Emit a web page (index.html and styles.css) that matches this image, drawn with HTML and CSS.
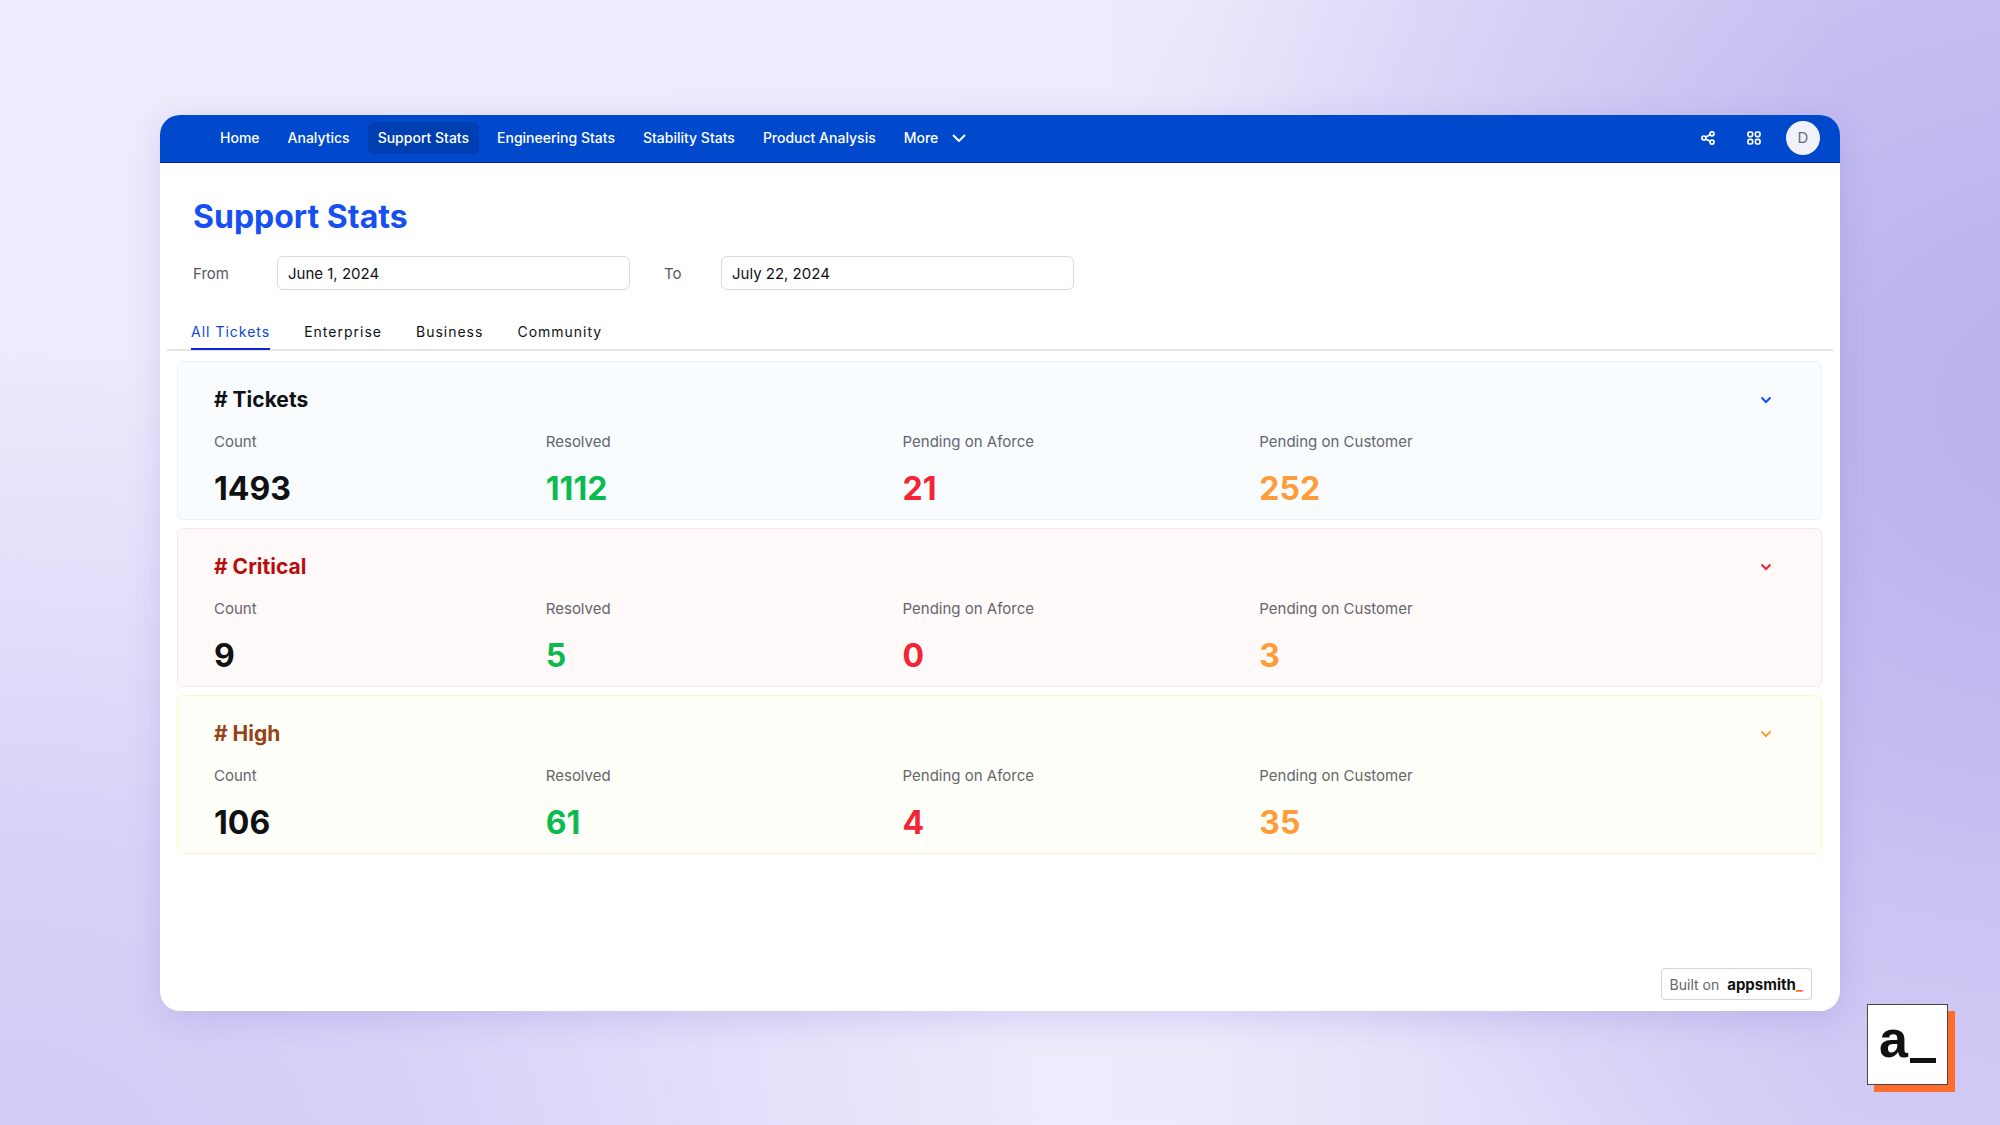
FILE: index.html
```html
<!DOCTYPE html>
<html lang="en">
<head>
  <meta charset="UTF-8" />
  <meta name="viewport" content="width=device-width, initial-scale=1" />
  <title>Support Stats</title>
  <link rel="stylesheet" href="styles.css">
</head>
<body>
  <div class="window">
    <!-- Top navigation -->
    <header class="navbar">
      <nav class="nav-links">
        <a href="#">Home</a>
        <a href="#">Analytics</a>
        <a href="#" class="active">Support Stats</a>
        <a href="#">Engineering Stats</a>
        <a href="#">Stability Stats</a>
        <a href="#">Product Analysis</a>
        <button class="more" type="button">
          More
          <svg width="14" height="8" viewBox="0 0 14 8" fill="none" stroke="currentColor" stroke-width="2"><path d="M1 1l6 6 6-6"/></svg>
        </button>
      </nav>
      <div class="nav-actions">
        <button class="icon-btn" type="button" aria-label="Share">
          <svg width="14" height="14" viewBox="0 0 14 14" fill="none" stroke="currentColor" stroke-width="1.7">
            <circle cx="2.9" cy="7" r="2"/>
            <circle cx="11" cy="2.8" r="2"/>
            <circle cx="11" cy="11.2" r="2"/>
            <path d="M4.7 6.1l4.5-2.4M4.7 7.9l4.5 2.4"/>
          </svg>
        </button>
        <button class="icon-btn" type="button" aria-label="Apps">
          <svg width="14" height="14" viewBox="0 0 14 14" fill="none" stroke="currentColor" stroke-width="1.7">
            <rect x="1" y="1" width="4.6" height="4.6" rx="1.6"/>
            <rect x="8.4" y="1" width="4.6" height="4.6" rx="1.6"/>
            <rect x="1" y="8.4" width="4.6" height="4.6" rx="1.6"/>
            <rect x="8.4" y="8.4" width="4.6" height="4.6" rx="1.6"/>
          </svg>
        </button>
        <button class="avatar" type="button">D</button>
      </div>
    </header>

    <main class="content">
      <h1>Support Stats</h1>

      <!-- Date range -->
      <form class="dates">
        <div class="field">
          <label for="from">From</label>
          <input id="from" type="text" value="June 1, 2024">
        </div>
        <div class="field field-to">
          <label for="to">To</label>
          <input id="to" type="text" value="July 22, 2024">
        </div>
      </form>

      <div class="tabs" role="tablist">
        <button class="tab selected" role="tab" aria-selected="true" type="button">All Tickets</button>
        <button class="tab" role="tab" type="button">Enterprise</button>
        <button class="tab" role="tab" type="button">Business</button>
        <button class="tab" role="tab" type="button">Community</button>
      </div>

      <!-- Ticket cards -->
      <div class="cards">
        <section class="card tickets">
          <div class="card-head">
            <h2># Tickets</h2>
            <button class="toggle" type="button" aria-label="Expand tickets">
              <svg width="12" height="8" viewBox="0 0 12 8" fill="none" stroke="currentColor" stroke-width="2"><path d="M1.5 1.5L6 6l4.5-4.5"/></svg>
            </button>
          </div>
          <dl class="stats">
            <div><dt>Count</dt><dd>1493</dd></div>
            <div><dt>Resolved</dt><dd class="green">1112</dd></div>
            <div><dt>Pending on Aforce</dt><dd class="red">21</dd></div>
            <div><dt>Pending on Customer</dt><dd class="orange">252</dd></div>
          </dl>
        </section>

        <section class="card critical">
          <div class="card-head">
            <h2># Critical</h2>
            <button class="toggle" type="button" aria-label="Expand critical">
              <svg width="12" height="8" viewBox="0 0 12 8" fill="none" stroke="currentColor" stroke-width="2"><path d="M1.5 1.5L6 6l4.5-4.5"/></svg>
            </button>
          </div>
          <dl class="stats">
            <div><dt>Count</dt><dd>9</dd></div>
            <div><dt>Resolved</dt><dd class="green">5</dd></div>
            <div><dt>Pending on Aforce</dt><dd class="red">0</dd></div>
            <div><dt>Pending on Customer</dt><dd class="orange">3</dd></div>
          </dl>
        </section>

        <section class="card high">
          <div class="card-head">
            <h2># High</h2>
            <button class="toggle" type="button" aria-label="Expand high">
              <svg width="12" height="8" viewBox="0 0 12 8" fill="none" stroke="currentColor" stroke-width="2"><path d="M1.5 1.5L6 6l4.5-4.5"/></svg>
            </button>
          </div>
          <dl class="stats">
            <div><dt>Count</dt><dd>106</dd></div>
            <div><dt>Resolved</dt><dd class="green">61</dd></div>
            <div><dt>Pending on Aforce</dt><dd class="red">4</dd></div>
            <div><dt>Pending on Customer</dt><dd class="orange">35</dd></div>
          </dl>
        </section>
      </div>
    </main>

    <footer class="footer">
      <a class="built-on" href="#">Built on <span class="brand">appsmith<span class="cursor">_</span></span></a>
    </footer>
  </div>

  <!-- Logo in the page corner -->
  <div class="logo">a<span class="logo-bar"></span></div>
</body>
</html>
```
FILE: styles.css
```css
* {
  box-sizing: border-box;
}

body {
  margin: 0;
  min-height: 100vh;
  padding: 115px 8% 114px;
  display: flex;
  position: relative;
  font-family: Inter, "Liberation Sans", sans-serif;
  font-size: 15px;
  color: #101112;
  background:
    radial-gradient(ellipse 52% 76% at 104% 36%, #b9b0ec 0%, rgba(185, 176, 236, 0.8) 25%, rgba(185, 176, 236, 0.3) 65%, rgba(185, 176, 236, 0) 100%),
    radial-gradient(ellipse 52% 75% at 0% 105%, #d1c9f6 0%, rgba(209, 201, 246, 0.75) 40%, rgba(209, 201, 246, 0) 100%),
    linear-gradient(90deg, #eeebfc 0%, #edeafc 60%, #d5cef6 92%, #d5cef6 100%);
}

button {
  font: inherit;
  color: inherit;
  background: none;
  border: none;
  padding: 0;
  cursor: pointer;
}

.window {
  flex: 1;
  min-width: 0;
  display: flex;
  flex-direction: column;
  background: #fff;
  border-radius: 20px;
  overflow: hidden;
  box-shadow: 0 8px 32px rgba(90, 70, 190, 0.16);
}

/* ===== Navbar ===== */
.navbar {
  display: flex;
  align-items: center;
  justify-content: space-between;
  height: 48px;
  padding: 0 20px 2px 50px;
  background: #0049cc;
  border-bottom: 1px solid #0019b8;
  color: #fff;
}
.nav-links {
  display: flex;
  gap: 8px;
  font-size: 14px;
  font-weight: 500;
}
.nav-links a,
.more {
  display: flex;
  align-items: center;
  height: 32px;
  padding: 0 10px;
  border-radius: 6px;
  color: #fff;
  text-decoration: none;
  white-space: nowrap;
}
.nav-links a.active {
  background: #003fb2;
}
.more {
  gap: 14px;
}
.nav-actions {
  display: flex;
  align-items: center;
  gap: 14px;
}
.icon-btn {
  display: flex;
  align-items: center;
  justify-content: center;
  width: 32px;
  height: 32px;
}
.avatar {
  width: 34px;
  height: 34px;
  margin-left: 2px;
  border-radius: 50%;
  background: #f1f2f9;
  color: #6a6d78;
}

/* ===== Page content ===== */
.content {
  padding: 34px 7px 0;
}
h1 {
  margin: 0 26px;
  font-size: 32px;
  line-height: 40px;
  font-weight: 700;
  color: #1650f0;
}
.dates {
  display: flex;
  gap: 34px;
  margin: 19px 26px 0;
}
.field {
  display: flex;
  align-items: center;
}
.field label {
  width: 84px;
  color: #55585f;
}
.field-to label {
  width: 57px;
}
.field input {
  width: 353px;
  height: 34px;
  padding: 0 10px;
  border: 1px solid #d9dadd;
  border-radius: 6px;
  background: #fff;
  font: inherit;
  color: #101112;
}

/* ===== Tabs ===== */
.tabs {
  display: flex;
  gap: 34px;
  margin-top: 24px;
  padding: 0 24px;
  border-bottom: 2px solid #e4e5e8;
}
.tab {
  height: 36px;
  margin-bottom: -1px;
  border-bottom: 2px solid transparent;
  font-size: 14px;
  letter-spacing: 1px;
}
.tab.selected {
  color: #0d47d9;
  border-bottom-color: #1322d4;
}

/* ===== Cards ===== */
.cards {
  display: flex;
  flex-direction: column;
  gap: 8px;
  padding: 10px 11px 0 10px;
}
.card {
  padding: 25px 36px 12px;
  border: 1px solid;
  border-radius: 6px;
}
.card-head {
  display: flex;
  align-items: center;
  justify-content: space-between;
}
.card h2 {
  margin: 0;
  font-size: 21px;
  line-height: 26px;
  font-weight: 700;
}
.toggle {
  display: flex;
  align-items: center;
  justify-content: center;
  width: 38px;
  height: 24px;
}
.stats {
  display: grid;
  grid-template-columns: 332fr 357fr 357fr 526fr;
  margin: 19px 0 0;
}
.stats dt {
  line-height: 20px;
  color: #63666d;
}
.stats dd {
  margin: 19px 0 0;
  font-size: 32px;
  line-height: 36px;
  font-weight: 700;
}
.stats .green {
  color: #0cbb50;
}
.stats .red {
  color: #f32434;
}
.stats .orange {
  color: #ff9c38;
}

.tickets {
  background: #f8fcff;
  border-color: #edf1fe;
}
.tickets .toggle {
  color: #1650f0;
}
.critical {
  background: #fff9f9;
  border-color: #ffe3e4;
}
.critical h2 {
  color: #b80b0b;
}
.critical .toggle {
  color: #ee2233;
}
.high {
  background: #fffffa;
  border-color: #fdf6c2;
}
.high h2 {
  color: #964215;
}
.high .toggle {
  color: #ff9c38;
}

/* ===== Footer badge ===== */
.footer {
  display: flex;
  justify-content: flex-end;
  margin-top: auto;
  padding: 0 28px 11px;
}
.built-on {
  display: flex;
  align-items: center;
  gap: 8px;
  height: 32px;
  padding: 0 8px;
  border: 1px solid #cdd5df;
  border-radius: 4px;
  font-size: 14px;
  color: #63666d;
  text-decoration: none;
}
.brand {
  font-size: 15px;
  font-weight: 700;
  color: #101112;
}
.cursor {
  color: #ff6d2d;
}

/* ===== Corner logo ===== */
.logo {
  position: absolute;
  right: 52px;
  bottom: 40px;
  width: 81px;
  height: 81px;
  display: flex;
  align-items: center;
  padding: 0 11px 12px;
  border: 1px solid #4a4646;
  background: #fff;
  box-shadow: 7px 7px 0 #ff6d2d;
  font-family: "Liberation Sans", sans-serif;
  font-size: 52px;
  line-height: 60px;
  font-weight: 700;
}
.logo-bar {
  align-self: flex-end;
  width: 26px;
  height: 5px;
  margin: 0 0 9px 2px;
  background: #101112;
}
```
